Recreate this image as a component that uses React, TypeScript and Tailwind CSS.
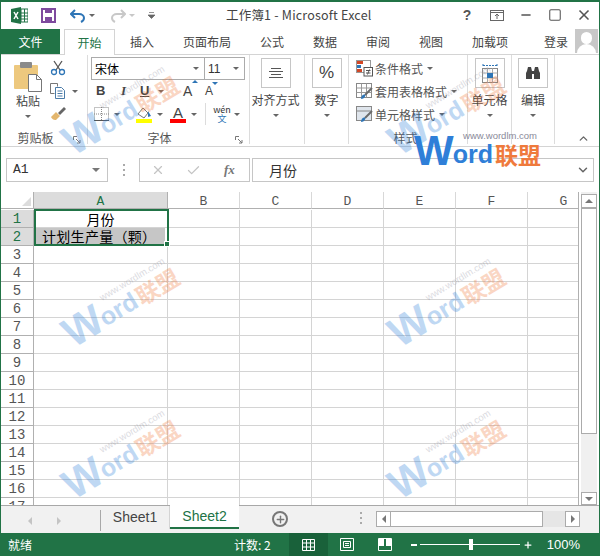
import { Check, ChevronDown, ChevronUp, Minus, Plus, Square, X } from 'lucide-react'

const cjk = "font-['Noto_Sans_CJK_SC','Liberation_Sans',sans-serif]"
const rows = Array.from({ length: 17 }, (_, i) => i + 1)
const cols = ['A', 'B', 'C', 'D', 'E', 'F', 'G']
const tabs = [
  { label: '插入', cls: 'w-[24px] ml-[15px]' },
  { label: '页面布局', cls: 'w-[48px] ml-[29px]' },
  { label: '公式', cls: 'w-[24px] ml-[29px]' },
  { label: '数据', cls: 'w-[24px] ml-[29px]' },
  { label: '审阅', cls: 'w-[24px] ml-[29px]' },
  { label: '视图', cls: 'w-[24px] ml-[29px]' },
  { label: '加载项', cls: 'w-[36px] ml-[29px]' },
]

function Caret({ className = '' }: { className?: string }) {
  return <span className={`w-0 h-0 border-l-[3px] border-r-[3px] border-t-[3px] border-l-transparent border-r-transparent border-t-[#666] shrink-0 ${className}`} />
}

function Launcher() {
  return (
    <svg width="8" height="8" viewBox="0 0 8 8" className="shrink-0">
      <path d="M.5 4V.5H4M3 3l4 4M7 4v3H4" fill="none" stroke="#777" />
    </svg>
  )
}

function GroupLabel({ text, launcher }: { text: string; launcher?: boolean }) {
  return (
    <>
      <div className={`absolute -bottom-[3px] left-0 h-[18px] flex items-center justify-center text-[12px] text-[#555] ${launcher ? 'right-[18px]' : 'right-[5px]'}`}>
        {text}
      </div>
      {launcher && <span className="absolute right-[6px] bottom-0"><Launcher /></span>}
    </>
  )
}

function BigButton({ label, children, width }: { label: string; children: React.ReactNode; width: string }) {
  return (
    <div className={`relative h-full flex flex-col items-center border-r border-[#dcdcdc] pt-[3px] ${width}`}>
      <div className="w-[30px] h-[30px] border border-[#c6c6c6] flex items-center justify-center">{children}</div>
      <div className="text-[12px] text-[#444] mt-[3px] leading-[18px] whitespace-nowrap">{label}</div>
      <Caret className="mt-[5px]" />
    </div>
  )
}

function Watermark({ className }: { className: string }) {
  return (
    <div className={`absolute w-[124px] -rotate-[31deg] opacity-30 pointer-events-none ${className}`}>
      <Logo />
    </div>
  )
}

function Logo() {
  return (
    <div className="w-[124px] font-['Liberation_Sans',sans-serif]">
      <div className="text-[9.5px] leading-[10px] text-[#8a8a9a] text-right pr-[1px] -mb-[5px] whitespace-nowrap">www.wordlm.com</div>
      <div className="flex items-end leading-none font-bold whitespace-nowrap">
        <span className="text-[42px] leading-[30px] text-[#2f7fd8]">W</span>
        <span className="text-[25px] leading-[24px] text-[#2f7fd8] -ml-[1px]">ord</span>
        <span className={`text-[23px] leading-[24px] text-[#ef7a3c] ml-[2px] ${cjk}`}>联盟</span>
      </div>
    </div>
  )
}

function StyleIcon({ kind }: { kind: 'cond' | 'table' | 'cell' }) {
  return (
    <svg width="17" height="17" viewBox="0 0 17 17" className="shrink-0">
      {kind === 'cond' ? (
        <>
          <rect x=".5" y=".5" width="14" height="12" fill="#fff" stroke="#999" />
          <rect x="1" y="1" width="6" height="3" fill="#d24726" />
          <rect x="1" y="5" width="4" height="3" fill="#2e75b6" />
          <rect x="1" y="9" width="5" height="3" fill="#d24726" />
          <rect x="8" y="7.5" width="8.5" height="8.5" fill="#fff" stroke="#555" />
          <path d="M10 10.500h4.500M10 13h4.500M13.500 9.500l-2 5" stroke="#555" />
        </>
      ) : (
        <>
          <rect x=".5" y=".5" width="15" height="14" fill={kind === 'cell' ? '#dfe5ec' : '#fff'} stroke="#888" />
          {kind === 'table' && <path d="M.5 5h15M.5 9.500h15M5.500.5v14M10.500.5v14" stroke="#999" />}
          {kind === 'cell' && <path d="M.5 5h15" stroke="#888" />}
          <path d="M16 5l-7 7" stroke="#6b6b6b" strokeWidth="2" />
          <path d="M5 16c0-3 2-5 4-4.500 1 1-.5 4.500-4 4.500z" fill="#2e75b6" />
        </>
      )}
    </svg>
  )
}

function StyleRow({ kind, label }: { kind: 'cond' | 'table' | 'cell'; label: string }) {
  return (
    <div className="h-[23px] flex items-center">
      <StyleIcon kind={kind} />
      <span className="ml-[2px] text-[12px] text-[#555] whitespace-nowrap">{label}</span>
      <Caret className="ml-[4px]" />
    </div>
  )
}

function Ribbon() {
  return (
    <div className="relative h-[92px] border-b border-[#d4d4d4] flex pl-[1px] pb-[2px]">
      {/* clipboard */}
      <div className="relative w-[86px] h-full border-r border-[#dcdcdc] flex pl-[12px] pt-[7px]">
        <div className="w-[28px] flex flex-col items-center">
          <svg width="29" height="30" viewBox="0 0 29 30" className="shrink-0">
            <rect x="0" y="3" width="24" height="24" rx="1" fill="#edc87e" />
            <rect x="6" y="0" width="12" height="6" rx="1" fill="#8a8a8a" />
            <path d="M14.500 12.500h8l5 5v12h-13z" fill="#fff" stroke="#777" />
            <path d="M22.500 12.500v5h5" fill="none" stroke="#777" />
          </svg>
          <div className="text-[12px] leading-[18px] text-[#444]">粘贴</div>
          <Caret className="mt-[5px]" />
        </div>
        <div className="ml-[8px] -mt-[2px] flex flex-col">
          <svg width="16" height="16" viewBox="0 0 16 16">
            <path d="M4 1l6 9M12 1L6 10" stroke="#555" strokeWidth="1.300" fill="none" />
            <circle cx="4" cy="12" r="2.500" fill="none" stroke="#2e75b6" strokeWidth="1.300" />
            <circle cx="12" cy="12" r="2.500" fill="none" stroke="#2e75b6" strokeWidth="1.300" />
          </svg>
          <div className="mt-[7px] flex items-center">
            <svg width="16" height="16" viewBox="0 0 16 16">
              <path d="M.5.500h7v3M.5.500v10h4" fill="none" stroke="#777" />
              <path d="M5.500 4.500h6l3 3v8h-9z" fill="#fff" stroke="#4a7ba8" />
              <path d="M7.500 8h5M7.500 10.500h5M7.500 13h5" stroke="#4a7ba8" />
            </svg>
            <Caret className="ml-[6px]" />
          </div>
          <svg width="17" height="15" viewBox="0 0 17 15" className="mt-[7px]">
            <path d="M1 11l5-5 4 4-4 4c-2 .5-4-1-5-3z" fill="#e3b66d" />
            <path d="M8 7l6-6 2 2-6 6z" fill="#666" />
          </svg>
        </div>
        <GroupLabel text="剪贴板" launcher />
      </div>
      {/* font */}
      <div className="relative w-[162px] h-full border-r border-[#dcdcdc] pl-[3px] pt-[2px]">
        <div className="flex h-[23px] w-[154px]">
          <div className="w-[114px] border border-[#ababab] flex items-center justify-between pl-[3px] pr-[5px] text-[12px] text-black">
            宋体<Caret />
          </div>
          <div className="w-[40px] border border-l-0 border-[#ababab] flex items-center justify-between pl-[3px] pr-[5px] text-[12px] text-[#333] font-['Liberation_Sans',sans-serif]">
            11<Caret />
          </div>
        </div>
        <div className="h-[22px] flex items-center text-[#444] font-['Liberation_Sans',sans-serif]">
          <span className="ml-[5px] w-[25px] text-[13px] font-bold">B</span>
          <span className="w-[19px] text-[13px] italic font-bold font-['Liberation_Serif',serif]">I</span>
          <span className="w-[15px] text-[13px] font-bold underline">U</span>
          <Caret className="ml-[3px]" />
          <span className="ml-[19px] w-[22px] text-[14px] relative">A<span className="absolute -top-[1px] left-[9px] w-0 h-0 border-l-[3px] border-r-[3px] border-b-[3px] border-l-transparent border-r-transparent border-b-[#2e75b6]" /></span>
          <span className="text-[12px] relative">A<span className="absolute top-0 left-[7px] w-0 h-0 border-l-[3px] border-r-[3px] border-t-[3px] border-l-transparent border-r-transparent border-t-[#2e75b6]" /></span>
        </div>
        <div className="h-[24px] flex items-center">
          <svg width="15" height="14" viewBox="0 0 15 14" className="ml-[3px]">
            <rect x=".5" y=".5" width="14" height="13" fill="none" stroke="#888" strokeDasharray="1 1" />
            <path d="M7.500 0v14M0 7h15" stroke="#888" strokeDasharray="1 1" />
            <path d="M0 13.500h15" stroke="#555" />
          </svg>
          <Caret className="ml-[5px]" />
          <svg width="16" height="17" viewBox="0 0 16 17" className="ml-[16px]">
            <path d="M2 8l5-6 5 5-4 5z" fill="#fff" stroke="#777" />
            <path d="M12 5l3 5-3 1z" fill="#2e75b6" />
            <rect x="0" y="13" width="16" height="4" fill="#ffff00" />
          </svg>
          <Caret className="ml-[5px]" />
          <div className="ml-[7px] w-[16px] flex flex-col items-center">
            <span className="text-[15px] leading-[13px] text-[#444] font-['Liberation_Sans',sans-serif]">A</span>
            <span className="w-[16px] h-[4px] bg-[#ff0000]" />
          </div>
          <Caret className="ml-[5px]" />
          <span className="ml-[8px] w-px h-[22px] bg-[#dcdcdc]" />
          <div className="ml-[8px] w-[16px] flex flex-col items-center text-[9px] leading-[9px] text-[#333]">
            <span>wén</span>
            <span className="text-[#2e75b6]">文</span>
          </div>
          <Caret className="ml-[4px]" />
        </div>
        <GroupLabel text="字体" launcher />
      </div>
      <BigButton label="对齐方式" width="w-[55px] pr-[3px]">
        <svg width="14" height="11" viewBox="0 0 14 11"><path d="M2 .5h10M0 3.500h14M2 6.500h10M0 9.500h14" stroke="#555" /></svg>
      </BigButton>
      <BigButton label="数字" width="w-[44px]">
        <span className="text-[17px] text-[#444] font-['Liberation_Sans',sans-serif]">%</span>
      </BigButton>
      {/* styles */}
      <div className="relative w-[119px] h-full border-r border-[#dcdcdc] pl-[7px] pt-[2px]">
        <StyleRow kind="cond" label="条件格式" />
        <StyleRow kind="table" label="套用表格格式" />
        <StyleRow kind="cell" label="单元格样式" />
        <GroupLabel text="样式" />
      </div>
      <BigButton label="单元格" width="w-[44px]">
        <svg width="16" height="20" viewBox="0 0 16 20">
          <path d="M1 2.500h14M1 1v3M15 1v3" stroke="#2e75b6" strokeDasharray="2 1" />
          <rect x=".5" y="5.500" width="15" height="14" fill="#fff" stroke="#888" />
          <path d="M.5 10h15M.5 15h15M5.500 5.500v14M10.500 5.500v14" stroke="#aaa" />
          <rect x="5" y="10" width="6" height="5" fill="#2e75b6" />
        </svg>
      </BigButton>
      <BigButton label="编辑" width="w-[43px]">
        <svg width="16" height="14" viewBox="0 0 16 14">
          <path d="M2 5L3 1h3l1 4v8H1V7zM14 5l-1-4h-3L9 5v8h6V7z" fill="#444" />
          <rect x="7" y="5" width="2" height="3" fill="#444" />
        </svg>
      </BigButton>
      <ChevronUp size={13} strokeWidth={2.500} className="absolute right-[9px] bottom-[1px] text-[#666]" />
    </div>
  )
}

function Sheet() {
  return (
    <div className="relative h-[313px] flex">
      <div className="w-[578px] h-[313px] overflow-hidden border-r border-[#b0b0b0]">
        <div className="grid grid-cols-[33px_134px_72px_72px_72px_72px_72px_72px] auto-rows-[18px]">
          <div className="h-[17px] bg-white border-r border-b border-[#b0b0b0] relative">
            <span className="absolute right-[2px] bottom-[2px] w-0 h-0 border-l-[9px] border-t-[9px] border-l-transparent border-t-transparent border-b-0 border-r-[9px] border-r-[#dcdcdc]" />
          </div>
          {cols.map((c, i) => (
            <div
              key={c}
              className={`h-[17px] pt-[3px] flex items-center justify-center border-b border-[#b0b0b0] text-[13px] font-['Liberation_Mono',monospace] ${i === 0 ? 'bg-[#dcdcdc] text-[#217346] border-r border-r-[#b0b0b0]' : 'bg-white text-[#555] border-r border-r-[#d8d8d8]'}`}
            >
              {c}
            </div>
          ))}
          {rows.map((r) => (
            <Row key={r} n={r} />
          ))}
        </div>
      </div>
      <div className="ml-[2px] w-[16px] h-full bg-[#f0f0f0] flex flex-col">
        <div className="mt-[2px] h-[14px] bg-white border border-[#ababab] flex items-center justify-center">
          <span className="w-0 h-0 border-l-[4px] border-r-[4px] border-b-[4px] border-l-transparent border-r-transparent border-b-[#777]" />
        </div>
        <div className="h-[226px] bg-white border border-[#ababab]" />
        <div className="flex-1" />
        <div className="h-[13px] bg-white border border-[#ababab] flex items-center justify-center">
          <span className="w-0 h-0 border-l-[4px] border-r-[4px] border-t-[4px] border-l-transparent border-r-transparent border-t-[#777]" />
        </div>
      </div>
      {/* selection */}
      <div className="absolute left-[33px] top-[17px] w-[135px] h-[37px] border-2 border-[#217346]">
        <span className="absolute -right-[3px] -bottom-[3px] w-[6px] h-[6px] bg-[#217346] border border-white" />
      </div>
    </div>
  )
}

function Row({ n }: { n: number }) {
  const active = n <= 2
  return (
    <>
      <div className={`pt-[2px] flex items-center justify-center border-b border-r border-[#b0b0b0] text-[14px] font-['Liberation_Mono',monospace] ${active ? 'bg-[#dcdcdc] text-[#217346]' : 'bg-white text-[#555]'}`}>
        {n}
      </div>
      {cols.map((c) => (
        <div key={c} className="border-b border-r border-[#d4d4d4] bg-white overflow-hidden">
          {c === 'A' && n === 1 && <div className="text-center text-[14px] leading-[18px] text-black">月份</div>}
          {c === 'A' && n === 2 && (
            <div className="h-[16px] mx-[2px] bg-[#c6c6c6] pl-[6px] text-[14px] leading-[16px] text-black whitespace-nowrap tracking-[0.3px]">计划生产量（颗）</div>
          )}
        </div>
      ))}
    </>
  )
}

export default function App() {
  return (
    <div className={`relative w-[600px] h-[556px] overflow-hidden bg-white border-x border-t-2 border-[#217346] ${cjk}`}>
      {/* title bar */}
      <div className="relative h-[27px] flex items-center pl-[10px]">
        <svg width="17" height="17" viewBox="0 0 17 17">
          <path d="M0 2l10-2v17L0 15z" fill="#217346" />
          <rect x="10" y="2" width="7" height="13" fill="#fff" stroke="#217346" />
          <path d="M10 6h7M10 9h7M10 12h7M13.500 2v13" stroke="#217346" />
          <path d="M3 5l4 7M7 5l-4 7" stroke="#fff" strokeWidth="1.500" />
        </svg>
        <svg width="15" height="15" viewBox="0 0 15 15" className="ml-[13px]">
          <rect x="1" y="1" width="13" height="13" fill="none" stroke="#7e4a9e" strokeWidth="2" />
          <rect x="4" y="1" width="7" height="4" fill="#7e4a9e" />
          <rect x="4" y="9" width="7" height="5" fill="#7e4a9e" />
        </svg>
        <svg width="16" height="14" viewBox="0 0 16 14" className="ml-[14px]">
          <path d="M5 1L1 5l4 4M1 5h8c3 0 5 2 5 4s-1 3-3 4" fill="none" stroke="#2e75b6" strokeWidth="2" />
        </svg>
        <Caret className="ml-[3px]" />
        <svg width="16" height="14" viewBox="0 0 16 14" className="ml-[15px]">
          <path d="M11 1l4 4-4 4M15 5H7C4 5 2 7 2 9s1 3 3 4" fill="none" stroke="#c8c8c8" strokeWidth="2" />
        </svg>
        <Caret className="ml-[3px] border-t-[#c8c8c8]" />
        <svg width="7" height="7" viewBox="0 0 7 7" className="ml-[13px]">
          <path d="M1 .5h5M0 3l3.500 3.500L7 3z" stroke="#666" fill="#666" strokeWidth=".7" />
        </svg>
        <div className="absolute left-[225px] top-[3px] text-[12.500px] leading-[20px] text-[#444] whitespace-nowrap tracking-[0.2px]">工作簿1 - Microsoft Excel</div>
        <div className="absolute right-[7px] top-[3px] flex items-center text-[#555]">
          <span className="w-[24px] text-center text-[14px] leading-[20px] font-bold font-['Liberation_Sans',sans-serif]">?</span>
          <svg width="14" height="11" viewBox="0 0 14 11" className="ml-[11px]">
            <rect x=".5" y=".5" width="13" height="10" fill="none" stroke="#666" />
            <path d="M0 2.500h14M7 9V4M5 6l2-2 2 2" fill="none" stroke="#666" />
          </svg>
          <Minus size={14} strokeWidth={2.500} className="ml-[15px]" />
          <Square size={14} strokeWidth={1.800} className="ml-[15px]" />
          <X size={16} strokeWidth={2.500} className="ml-[14px]" />
        </div>
      </div>
      {/* tabs */}
      <div className="h-[25px] flex items-stretch text-[12px]">
        <div className="w-[59px] bg-[#217346] text-white flex items-center justify-center">文件</div>
        <div className="ml-[4px] w-[51px] border border-b-0 border-[#d4d4d4] text-[#217346] flex items-center justify-center bg-white -mb-px z-10">开始</div>
        {tabs.map((t) => (
          <div key={t.label} className={`flex items-center justify-center text-[#444] whitespace-nowrap ${t.cls}`}>{t.label}</div>
        ))}
        <div className="ml-[36px] flex items-center text-[#444]">登录</div>
        <div className="ml-[7px] w-[23px] h-[24px] bg-[#c8c8c8] overflow-hidden relative">
          <span className="absolute left-[6px] top-[3px] w-[11px] h-[12px] rounded-full bg-white" />
          <span className="absolute left-[2px] top-[15px] w-[19px] h-[12px] rounded-t-full bg-white" />
        </div>
      </div>
      <div className="border-t border-[#d4d4d4]">
        <Ribbon />
      </div>
      {/* formula bar */}
      <div className="h-[45px] pt-[11px] flex items-start pl-[5px] pr-[5px]">
        <div className="w-[102px] h-[24px] border border-[#c6c6c6] flex items-center justify-between pl-[6px] pr-[7px] text-[13px] text-[#333] font-['Liberation_Mono',monospace]">
          A1<Caret className="border-t-[#777] border-l-[4px] border-r-[4px] border-t-[4px]" />
        </div>
        <div className="w-[31px] h-[24px] flex flex-col items-center justify-center gap-[3px]">
          <span className="w-[2px] h-[2px] bg-[#aaa]" /><span className="w-[2px] h-[2px] bg-[#aaa]" /><span className="w-[2px] h-[2px] bg-[#aaa]" />
        </div>
        <div className="w-[111px] h-[24px] border border-[#c6c6c6] flex items-center pl-[11px] text-[#c4c4c4]">
          <X size={14} strokeWidth={2} />
          <Check size={15} strokeWidth={2} className="ml-[21px]" />
          <span className="ml-[23px] text-[13px] italic font-bold text-[#777] font-['Liberation_Serif',serif]">fx</span>
        </div>
        <div className="ml-[2px] flex-1 h-[24px] border border-[#c6c6c6] flex items-center justify-between pl-[16px] pr-[3px] text-[14px] text-[#333]">
          月份
          <ChevronDown size={14} strokeWidth={2.500} className="text-[#666]" />
        </div>
      </div>
      <Sheet />
      {/* sheet tabs */}
      <div className="h-[28px] bg-[#f1f1f1] flex items-start border-t border-[#a8a8a8]">
        <div className="w-[100px] h-[21px] mt-[4px] flex items-center pl-[27px] border-r border-[#a8a8a8]">
          <span className="w-0 h-0 border-y-[4px] border-r-[4px] border-y-transparent border-r-[#c4c4c4]" />
          <span className="ml-[25px] w-0 h-0 border-y-[4px] border-l-[4px] border-y-transparent border-l-[#c4c4c4]" />
        </div>
        <div className="w-[69px] h-[23px] flex items-center justify-center text-[14px] text-[#444] font-['Liberation_Sans',sans-serif] border-r border-[#d4d4d4]">Sheet1</div>
        <div className="w-[69px] h-[24px] -mt-px bg-white border-b-2 border-[#217346] flex items-center justify-center text-[14px] text-[#217346] font-['Liberation_Sans',sans-serif]">Sheet2</div>
        <div className="ml-[33px] mt-[5px] w-[16px] h-[16px] rounded-full border-2 border-[#777] flex items-center justify-center text-[#777]">
          <Plus size={11} strokeWidth={3} />
        </div>
        <div className="ml-[72px] mt-[6px] flex flex-col gap-[3px]">
          <span className="w-[2px] h-[2px] bg-[#aaa]" /><span className="w-[2px] h-[2px] bg-[#aaa]" /><span className="w-[2px] h-[2px] bg-[#aaa]" />
        </div>
        <div className="ml-[14px] mt-[5px] w-[204px] h-[16px] flex">
          <div className="w-[15px] bg-white border border-[#ababab] flex items-center justify-center">
            <span className="w-0 h-0 border-y-[4px] border-r-[4px] border-y-transparent border-r-[#777]" />
          </div>
          <div className="w-[152px] bg-white border-y border-r border-[#ababab]" />
          <div className="flex-1 bg-[#e6e6e6]" />
          <div className="w-[15px] bg-white border border-[#ababab] flex items-center justify-center">
            <span className="w-0 h-0 border-y-[4px] border-l-[4px] border-y-transparent border-l-[#777]" />
          </div>
        </div>
      </div>
      {/* status bar */}
      <div className="h-[23px] bg-[#217346] flex items-center text-white text-[12px]">
        <span className="ml-[7px]">就绪</span>
        <span className="ml-[202px]">计数: 2</span>
        <div className="ml-[18px] w-[39px] h-[23px] bg-[#19613a] flex items-center justify-center">
          <svg width="13" height="12" viewBox="0 0 13 12"><path d="M.5.500h12v11H.5zM.5 4h12M.5 8h12M4.500.5v11M8.500.5v11" fill="none" stroke="#fff" /></svg>
        </div>
        <svg width="14" height="13" viewBox="0 0 14 13" className="ml-[12px]"><path d="M.5.500h13v12H.5zM3.500 3.500h7v6h-7zM5 5.500h4M5 7.500h4" fill="none" stroke="#fff" /></svg>
        <svg width="14" height="13" viewBox="0 0 14 13" className="ml-[24px]"><path d="M.5.500h13v12H.5z" fill="none" stroke="#fff" /><path d="M1 0h5v8H1zM8 0h5v8H8z" fill="#fff" /></svg>
        <span className="ml-[19px] w-[6px] h-[2px] bg-white" />
        <div className="ml-[3px] w-[100px] h-px bg-white relative">
          <span className="absolute left-[49px] -top-[5px] w-[4px] h-[11px] bg-white" />
        </div>
        <Plus size={10} strokeWidth={3} className="ml-[3px]" />
        <span className="ml-[14px] text-[13px] font-['Liberation_Sans',sans-serif]">100%</span>
      </div>
      {/* watermarks */}
      <Watermark className="left-[55px] top-[91px]" />
      <Watermark className="left-[381px] top-[91px]" />
      <Watermark className="left-[55px] top-[283px]" />
      <Watermark className="left-[381px] top-[283px]" />
      <Watermark className="left-[55px] top-[435px]" />
      <Watermark className="left-[381px] top-[435px]" />
      <div className="absolute left-[413px] top-[129px] pointer-events-none"><Logo /></div>
    </div>
  )
}
